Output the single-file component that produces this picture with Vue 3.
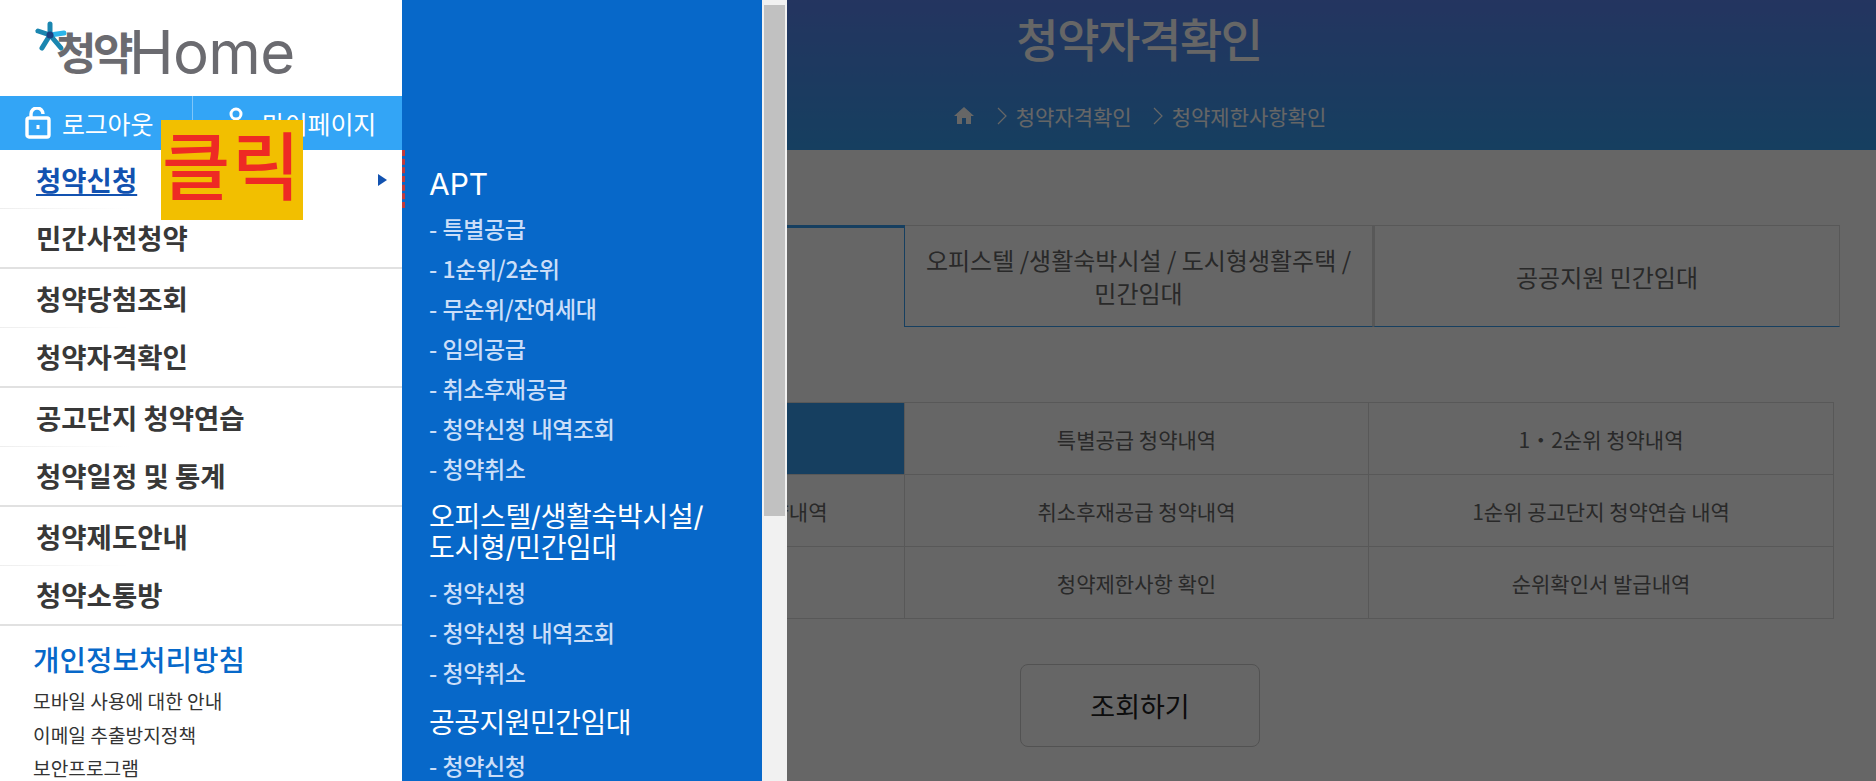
<template>
  <div class="page">
    <main class="content">
      <header class="hero">
        <h1>청약자격확인</h1>
        <nav class="crumb">
          <svg class="home" viewBox="0 0 24 24"><path d="M10 20v-6h4v6h5v-8h3L12 3 2 12h3v8z" /></svg>
          <svg class="chev" viewBox="0 0 10 18"><polyline points="1,1 9,9 1,17" /></svg>
          <span>청약자격확인</span>
          <svg class="chev" viewBox="0 0 10 18"><polyline points="1,1 9,9 1,17" /></svg>
          <span>청약제한사항확인</span>
        </nav>
      </header>

      <div class="tabs">
        <div class="tab on">APT</div>
        <div class="tab">오피스텔 /생활숙박시설 / 도시형생활주택 /<br />민간임대</div>
        <div class="tab">공공지원 민간임대</div>
      </div>

      <div class="grid">
        <div
          v-for="(c, i) in cells"
          :key="i"
          class="cell"
          :class="{ on: i === 0 }"
        >
          {{ c }}
        </div>
      </div>

      <div class="actions">
        <button class="search">조회하기</button>
      </div>
    </main>

    <div class="dim"></div>

    <aside class="drawer">
      <div class="side">
        <div class="logo">
          <svg class="star" viewBox="0 0 34 34">
            <g stroke-width="5" stroke-linecap="round">
              <line x1="16" y1="15" x2="16" y2="4" stroke="#1a86b0" />
              <line x1="16" y1="15" x2="4" y2="11" stroke="#1a86b0" />
              <line x1="16" y1="15" x2="30" y2="13" stroke="#2cb5ea" />
              <line x1="16" y1="15" x2="27" y2="28" stroke="#1a86b0" />
              <line x1="16" y1="15" x2="8" y2="28" stroke="#1a86b0" />
            </g>
            <circle cx="16" cy="15" r="3.5" fill="#1b3f80" />
          </svg>
          <span class="logo-ko">청약</span><span class="logo-en">Home</span>
        </div>

        <div class="userbar">
          <a class="ub first">
            <svg class="lock" viewBox="0 0 26 32">
              <path d="M6 11V7a6 6 0 0 1 12 0" />
              <rect x="2" y="11" width="22" height="19" rx="2" />
              <rect class="keyhole" x="11.5" y="18" width="3" height="4" />
            </svg>
            로그아웃
          </a>
          <a class="ub">
            <svg class="person" viewBox="0 0 24 32">
              <circle cx="12" cy="7" r="5" />
              <path d="M2 30c0-8 4-12 10-12s10 4 10 12" />
            </svg>
            마이페이지
          </a>
        </div>

        <ul class="menu">
          <li v-for="(m, i) in menu" :key="m" :class="{ active: i === 0 }">
            <a>{{ m }}</a>
            <i v-if="i === 0" class="arrow"></i>
          </li>
        </ul>

        <div class="policy">
          <h2>개인정보처리방침</h2>
          <p v-for="p in policies" :key="p">{{ p }}</p>
        </div>

        <div class="sticker">클릭</div>
      </div>

      <div class="sub">
        <i class="marker"></i>
        <template v-for="g in groups" :key="g.title">
          <h3 v-html="g.title"></h3>
          <div v-for="s in g.items" :key="s" class="sub-item">- {{ s }}</div>
        </template>
      </div>

      <div class="track"><div class="thumb"></div></div>
    </aside>
  </div>
</template>

<script setup>
const menu = [
  '청약신청',
  '민간사전청약',
  '청약당첨조회',
  '청약자격확인',
  '공고단지 청약연습',
  '청약일정 및 통계',
  '청약제도안내',
  '청약소통방',
];

const policies = ['모바일 사용에 대한 안내', '이메일 추출방지정책', '보안프로그램'];

const groups = [
  {
    title: 'APT',
    items: [
      '특별공급',
      '1순위/2순위',
      '무순위/잔여세대',
      '임의공급',
      '취소후재공급',
      '청약신청 내역조회',
      '청약취소',
    ],
  },
  {
    title: '오피스텔/생활숙박시설/<br>도시형/민간임대',
    items: ['청약신청', '청약신청 내역조회', '청약취소'],
  },
  {
    title: '공공지원민간임대',
    items: ['청약신청'],
  },
];

const cells = [
  '무순위 청약내역',
  '특별공급 청약내역',
  '1・2순위 청약내역',
  '무순위/잔여세대/임의공급 청약내역',
  '취소후재공급 청약내역',
  '1순위 공고단지 청약연습 내역',
  '당첨내역',
  '청약제한사항 확인',
  '순위확인서 발급내역',
];
</script>

<style>
html,
body {
  margin: 0;
  overflow: hidden;
  background: #fff;
}
</style>

<style scoped>
.page {
  position: relative;
  width: 1876px;
  height: 781px;
  overflow: hidden;
  font-family: 'Noto Sans CJK KR', 'Noto Sans', sans-serif;
  color: #666;
}

/* page under the drawer */
.content {
  margin-left: 402px;
}
.hero {
  height: 150px;
  background: linear-gradient(#5a84f0, #379ef0);
  color: #fff;
  display: flex;
  flex-direction: column;
  align-items: center;
}
.hero h1 {
  margin: 9px 0 0;
  font-size: 46px;
  line-height: 56px;
  font-weight: 500;
  letter-spacing: -1.4px;
}
.crumb {
  margin-top: 36px;
  display: flex;
  align-items: center;
  font-size: 21px;
  line-height: 30px;
}
.home {
  width: 24px;
  height: 24px;
  fill: #fff;
  margin-right: 21px;
}
.chev {
  width: 10px;
  height: 18px;
  fill: none;
  stroke: #fff;
  stroke-width: 1.2;
  margin-right: 9px;
}
.crumb span + .chev {
  margin-left: 21px;
}

.tabs {
  margin: 75px 36px 0;
  display: grid;
  grid-template-columns: 467px 468px 467px;
  height: 102px;
  box-sizing: border-box;
}
.tab {
  display: flex;
  align-items: center;
  justify-content: center;
  text-align: center;
  font-size: 24px;
  line-height: 33px;
  border: 1px solid #ddd;
  border-left: 0;
  border-bottom-color: #379ef0;
}
.tab:last-child {
  border-right: 1px solid #ddd;
}
.tab + .tab {
  border-left: 2px solid #ddd;
}
.tab:nth-child(2) {
  border-left: 0;
}
.tab.on {
  border: 1px solid #379ef0;
  border-top-width: 3px;
  border-bottom: 0;
}

.grid {
  margin: 75px 42px 0 38px;
  display: grid;
  grid-template-columns: 465px 464px 465px;
  grid-auto-rows: 72px;
  border-top: 1px solid #ddd;
}
.cell {
  display: flex;
  align-items: center;
  justify-content: center;
  font-size: 21px;
  border-right: 1px solid #ddd;
  border-bottom: 1px solid #ddd;
  box-sizing: border-box;
}
.cell.on {
  background: #379ef0;
  color: #fff;
}

.actions {
  margin-top: 45px;
  margin-left: 618px;
}
.search {
  width: 240px;
  height: 83px;
  background: #fff;
  border: 1px solid #ccc;
  border-radius: 8px;
  font: inherit;
  font-size: 27px;
  color: #222;
}

.dim {
  position: absolute;
  inset: 0;
  background: rgba(0, 0, 0, 0.6);
}

/* drawer */
.drawer {
  position: absolute;
  top: 0;
  left: 0;
  height: 781px;
  display: flex;
}
.side {
  position: relative;
  width: 402px;
  background: #fff;
  overflow: hidden;
}
.logo {
  position: relative;
  height: 96px;
  box-sizing: border-box;
  padding: 22px 0 0 56px;
  display: flex;
  align-items: baseline;
  color: #6b6b70;
}
.star {
  position: absolute;
  left: 34px;
  top: 20px;
  width: 34px;
  height: 34px;
  z-index: 1;
}
.logo-ko {
  font-size: 44px;
  font-weight: 700;
  line-height: 60px;
  letter-spacing: -3.5px;
  transform: translateY(-4px);
}
.logo-en {
  font-family: Inter, sans-serif;
  font-size: 60px;
  line-height: 60px;
  margin-left: -1px;
  letter-spacing: -0.6px;
}

.userbar {
  height: 54px;
  background: #33a5f6;
  display: flex;
  color: #fff;
  font-size: 25px;
  letter-spacing: -0.2px;
}
.ub {
  display: flex;
  align-items: center;
  width: 209px;
  padding-left: 31px;
  box-sizing: border-box;
}
.ub.first {
  width: 193px;
  padding-left: 25px;
  border-right: 1px solid #7fc6f9;
}
.lock {
  width: 26px;
  height: 32px;
  margin-right: 11px;
  fill: none;
  stroke: #fff;
  stroke-width: 3.4;
}
.keyhole {
  fill: #fff;
  stroke: none;
}
.person {
  width: 24px;
  height: 32px;
  margin-right: 14px;
  fill: none;
  stroke: #fff;
  stroke-width: 3;
}

.menu {
  margin: 0;
  padding: 0;
  list-style: none;
}
.menu li {
  position: relative;
  display: flex;
  align-items: center;
  padding: 0 0 2px 36px;
  box-sizing: border-box;
  font-size: 27.5px;
  font-weight: 700;
  color: #383838;
  height: 60px;
  border-bottom: 2px solid #e1e1e1;
}
.menu li:nth-child(odd) {
  height: 59px;
  border-bottom: 0;
}
.menu li:nth-child(odd)::after {
  content: '';
  position: absolute;
  left: 0;
  bottom: 0;
  width: 130px;
  height: 1px;
  background: linear-gradient(90deg, #eee, #fff);
}
.menu li.active {
  color: #1252b0;
}
.menu li.active a {
  text-decoration: underline;
  text-underline-offset: 3px;
}
.arrow {
  position: absolute;
  left: 378px;
  top: 24px;
  border-left: 9px solid #1252b0;
  border-top: 6px solid transparent;
  border-bottom: 6px solid transparent;
}

.policy {
  padding: 12px 0 0 33px;
}
.policy h2 {
  margin: 0 0 5px;
  font-size: 28.8px;
  line-height: 42px;
  font-weight: 500;
  color: #0768c9;
}
.policy p {
  margin: 0;
  font-size: 19.2px;
  line-height: 33.5px;
  color: #333;
}

.sticker {
  position: absolute;
  left: 161px;
  top: 120px;
  width: 142px;
  height: 100px;
  background: #f2bf00;
  color: #ee2a24;
  font-size: 74px;
  font-weight: 500;
  line-height: 84px;
  text-align: center;
  letter-spacing: 2px;
}

.sub {
  position: relative;
  width: 360px;
  box-sizing: border-box;
  padding: 169px 0 0 27px;
  background: #0768c9;
  overflow: hidden;
}
.sub h3 {
  margin: 14px 0 8px;
  font-family: Inter, 'Noto Sans CJK KR', sans-serif;
  font-size: 28px;
  line-height: 31px;
  font-weight: 400;
  letter-spacing: -0.3px;
  color: #fff;
}
.sub h3:first-of-type {
  margin-top: 0;
  margin-bottom: 8px;
  font-size: 30px;
  letter-spacing: 0;
}
.sub h3:last-of-type {
  margin-top: 16px;
  margin-bottom: 6px;
  letter-spacing: -0.5px;
}
.sub-item {
  height: 40px;
  line-height: 40px;
  font-size: 23px;
  font-weight: 500;
  letter-spacing: -0.4px;
  word-spacing: 1px;
  color: #cbdef8;
}
.marker {
  position: absolute;
  left: 0;
  top: 150px;
  height: 58px;
  border-left: 3px dashed #c23b3b;
}

.track {
  width: 25px;
  background: #f1f1f1;
  padding: 5px 2px 0;
  box-sizing: border-box;
}
.thumb {
  height: 511px;
  background: #c1c1c1;
}
</style>
